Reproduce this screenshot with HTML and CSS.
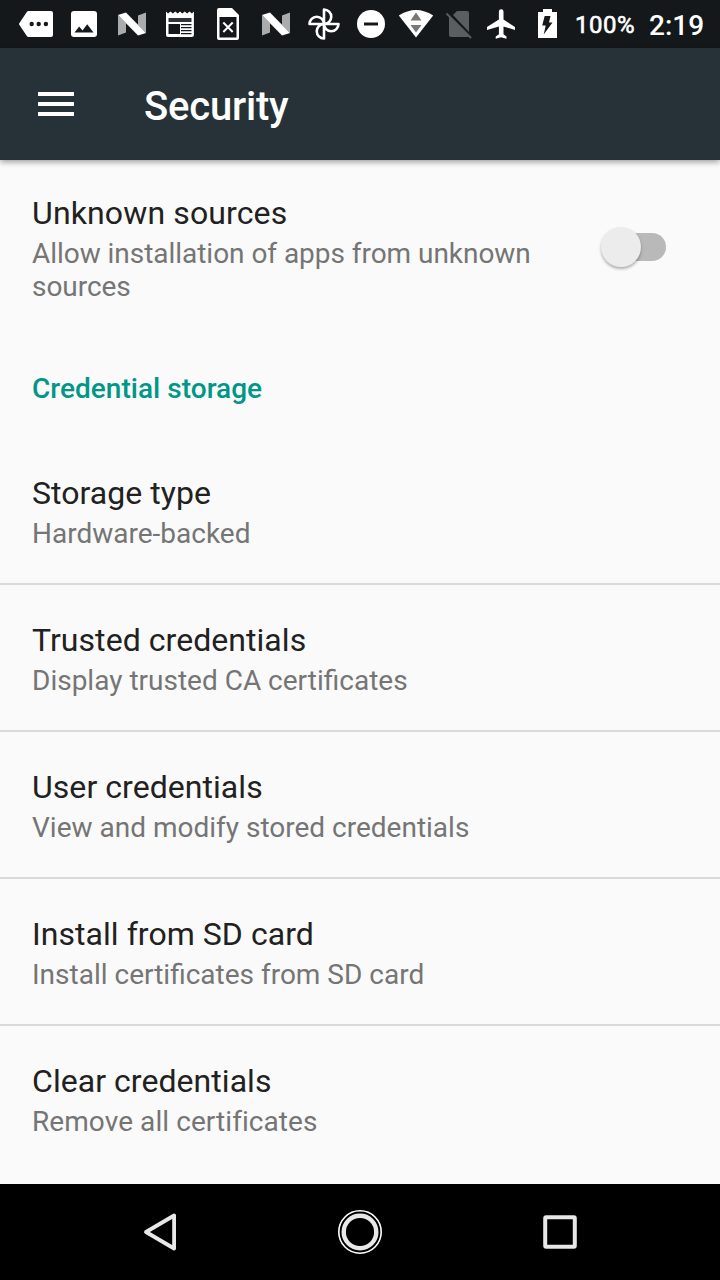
FILE: index.html
```html
<!DOCTYPE html>
<html lang="en">
<head>
<meta charset="utf-8">
<title>Security</title>
<link rel="stylesheet" href="styles.css">
</head>
<body>
<div class="screen">
  <div class="status-bar">
    <svg width="48" height="48" viewBox="12 0 48 48"><path fill="#fff" d="M28.500 11H51a2 2 0 0 1 2 2V35a2 2 0 0 1-2 2H28.500q-1 0-1.700-1L19.300 24.700q-.5-.8 0-1.500L26.800 12q.7-1 1.700-1z"/><g fill="#14181b"><circle cx="31.700" cy="24" r="2.200"/><circle cx="38.700" cy="24" r="2.200"/><circle cx="45.900" cy="24" r="2.200"/></g></svg>
    <svg width="48" height="48" viewBox="60 0 48 48"><rect x="71" y="11" width="26" height="26" rx="3" fill="#fff"/><path fill="#14181b" d="M74.500 32.500l4.700-6 3.300 4 4.700-6.200 6.300 8.200z"/></svg>
    <svg width="48" height="48" viewBox="108 0 48 48"><path fill="#a9abac" d="M118 15l8 8v9.500l-8 3zM138 15.500l8-3V33l-8-8z"/><path fill="#fff" d="M118 15l8-2.500 20 20.500-8 2.500z"/></svg>
    <svg width="48" height="48" viewBox="156 0 48 48"><path fill="#fff" d="M166 11.500l2 2 2.500-2 2.400 2 2.400-2 2.400 2 2.300-2 2.300 2 2.400-2 2.400 2 2.400-2 2.400 2 2-2V35a2 2 0 0 1-2 2H168a2 2 0 0 1-2-2z"/><path fill="#14181b" d="M168.500 24H180v10h-11.500zM181 24h10.500v1.300H181zM181 27h10.500v1.300H181zM181 30h10.500v1.300H181zM181 33h10.500v1.200H181z"/><path fill="#303438" d="M168.500 18h23v4h-23z"/></svg>
    <svg width="48" height="48" viewBox="204 0 48 48"><path fill="#fff" fill-rule="evenodd" d="M219 8h13l7 7v23a2 2 0 0 1-2 2h-18a2 2 0 0 1-2-2V10a2 2 0 0 1 2-2zM219.500 17v20.500h17V17z"/><path stroke="#fff" stroke-width="2" fill="none" d="M223.300 22.500l9.400 9.500m0-9.500l-9.400 9.500"/></svg>
    <svg width="48" height="48" viewBox="252 0 48 48"><path fill="#a9abac" d="M262 15l8 8v9.500l-8 3zM282 15.500l8-3V33l-8-8z"/><path fill="#fff" d="M262 15l8-2.500 20 20.500-8 2.500z"/></svg>
    <svg width="48" height="48" viewBox="300 0 48 48"><path stroke="#fff" stroke-width="2.600" fill="none" stroke-linejoin="round" d="M324 24V9.500a7.250 7.250 0 0 1 0 14.500H338.500a7.250 7.250 0 0 1-14.500 0V38.500a7.250 7.250 0 0 1 0-14.500H309.500a7.250 7.250 0 0 1 14.500 0z"/></svg>
    <svg width="46" height="48" viewBox="348 0 46 48"><circle cx="371" cy="24" r="14" fill="#fff"/><path fill="#14181b" d="M364 22.500h14v3h-14z"/></svg>
    <svg width="44" height="48" viewBox="394 0 44 48"><path fill="#fff" d="M398.800 15.500Q416 4.500 433.200 15.500L416 37.500z"/><path fill="#777" d="M416 12.500l5.500 8h-11zM410.500 25h11l-5.500 7.500z"/></svg>
    <svg width="42" height="48" viewBox="438 0 42 48"><path fill="#5b5e60" d="M457 11H467a2 2 0 0 1 2 2v19L453 15zM449 16.700L469 36q-.5 1-2 1h-16a2 2 0 0 1-2-2z"/><path stroke="#5b5e60" stroke-width="2" d="M446.500 13.500L471 38"/></svg>
    <svg width="44" height="48" viewBox="480 0 44 48"><path fill="#fff" d="M515 30v-3l-11.500-7.500v-8a2.300 2.300 0 0 0-4.600 0v8L487 27v3l11.900-3.500v7.800l-3.200 2.300v2.200l5.300-1.600 5.500 1.600v-2.200l-3-2.300v-7.800z"/></svg>
    <svg width="44" height="48" viewBox="524 0 44 48"><path fill="#fff" d="M543 9h9v3h5v26h-19V12h5z"/><path fill="#14181b" d="M544.700 16h5.800l-1.500 6.500h3.500L543.700 34.500l2-9h-3.500z"/></svg>
    <span class="battery">100%</span>
    <span class="clock">2:19</span>
  </div>
  <header class="app-bar">
    <div class="menu"><i></i><i></i><i></i></div>
    <h1>Security</h1>
  </header>
  <main class="content">
    <div class="item switch-item">
      <div class="label"><div class="title">Unknown sources</div><div class="summary">Allow installation of apps from unknown sources</div></div>
      <div class="switch"><span class="thumb"></span></div>
    </div>
    <h2 class="category">Credential storage</h2>
    <div class="item"><div class="title">Storage type</div><div class="summary">Hardware-backed</div></div>
    <div class="item"><div class="title">Trusted credentials</div><div class="summary">Display trusted CA certificates</div></div>
    <div class="item"><div class="title">User credentials</div><div class="summary">View and modify stored credentials</div></div>
    <div class="item"><div class="title">Install from SD card</div><div class="summary">Install certificates from SD card</div></div>
    <div class="item last"><div class="title">Clear credentials</div><div class="summary wide">Remove all certificates</div></div>
  </main>
  <nav class="nav-bar">
    <svg width="48" height="48" viewBox="136 1208 48 48"><path fill="none" stroke="#e8e8e8" stroke-width="3.800" stroke-linejoin="round" d="M146 1232l28.100-16.500v33z"/></svg>
    <svg width="48" height="48" viewBox="336 1208 48 48"><g fill="none"><circle cx="360" cy="1232" r="21.200" stroke="#fff" stroke-width="1.600"/><circle cx="360" cy="1232" r="16.300" stroke="#e8e8e8" stroke-width="4.400"/></g></svg>
    <svg width="48" height="48" viewBox="536 1208 48 48"><rect x="545.200" y="1217.200" width="29.600" height="29.600" rx="1" fill="none" stroke="#e8e8e8" stroke-width="4"/></svg>
  </nav>
</div>
</body>
</html>
```
FILE: styles.css
```css
* { box-sizing: border-box; }
body { margin: 0; font-family: Roboto, sans-serif; }
.screen { width: 720px; height: 1280px; display: flex; flex-direction: column; background: #fafafa; overflow: hidden; }
.status-bar { height: 48px; flex: none; display: flex; align-items: center; padding-left: 12px; background: #14181b; color: #fff; font-weight: 500; }
.status-bar svg { flex: none; }
.battery { width: 67px; margin-left: 7px; font-size: 24px; font-weight: 400; letter-spacing: .5px; line-height: 48px; padding-top: 1px; -webkit-text-stroke: .6px #fff; }
.clock { margin-left: 7px; font-size: 28px; line-height: 48px; padding-top: 3px; }
.app-bar { height: 112px; flex: none; display: flex; align-items: center; padding-left: 38px; background: #263238; color: #fff; box-shadow: 0 2px 6px rgba(0, 0, 0, .38); }
.menu { width: 36px; display: grid; gap: 6px; }
.menu i { height: 4px; background: #fff; }
.app-bar h1 { margin: 6px 0 0 70px; font-size: 40px; font-weight: 500; line-height: 48px; letter-spacing: -.2px; }
.content { flex: 1; }
.item { height: 147px; padding: 35px 32px 0; border-bottom: 2px solid #dadada; }
.item.last { border-bottom: 0; }
.switch-item { display: flex; height: 173px; border: 0; padding-top: 33px; justify-content: space-between; }
.label { width: 520px; }
.title { font-size: 32px; line-height: 40px; letter-spacing: .05px; color: #212121; }
.summary { font-size: 28px; line-height: 33px; margin-top: 4px; color: #757575; }
.switch-item .title { letter-spacing: .13px; }
.switch-item .summary { letter-spacing: -.04px; }
.summary.wide { letter-spacing: .07px; }
.category { margin: 0; height: 105px; padding: 39px 32px 0; font-size: 28px; line-height: 33px; font-weight: 500; letter-spacing: .03px; color: #009688; }
.switch { width: 60px; height: 28px; margin: 40px 22px 0 0; border-radius: 14px; background: #b9b9b9; display: flex; align-items: center; }
.thumb { width: 40px; height: 40px; flex: none; margin-left: -5px; border-radius: 50%; background: #ececec; box-shadow: 0 2px 3px rgba(0, 0, 0, .3); }
.nav-bar { height: 96px; flex: none; display: flex; align-items: center; justify-content: center; gap: 152px; background: #000; }
```
